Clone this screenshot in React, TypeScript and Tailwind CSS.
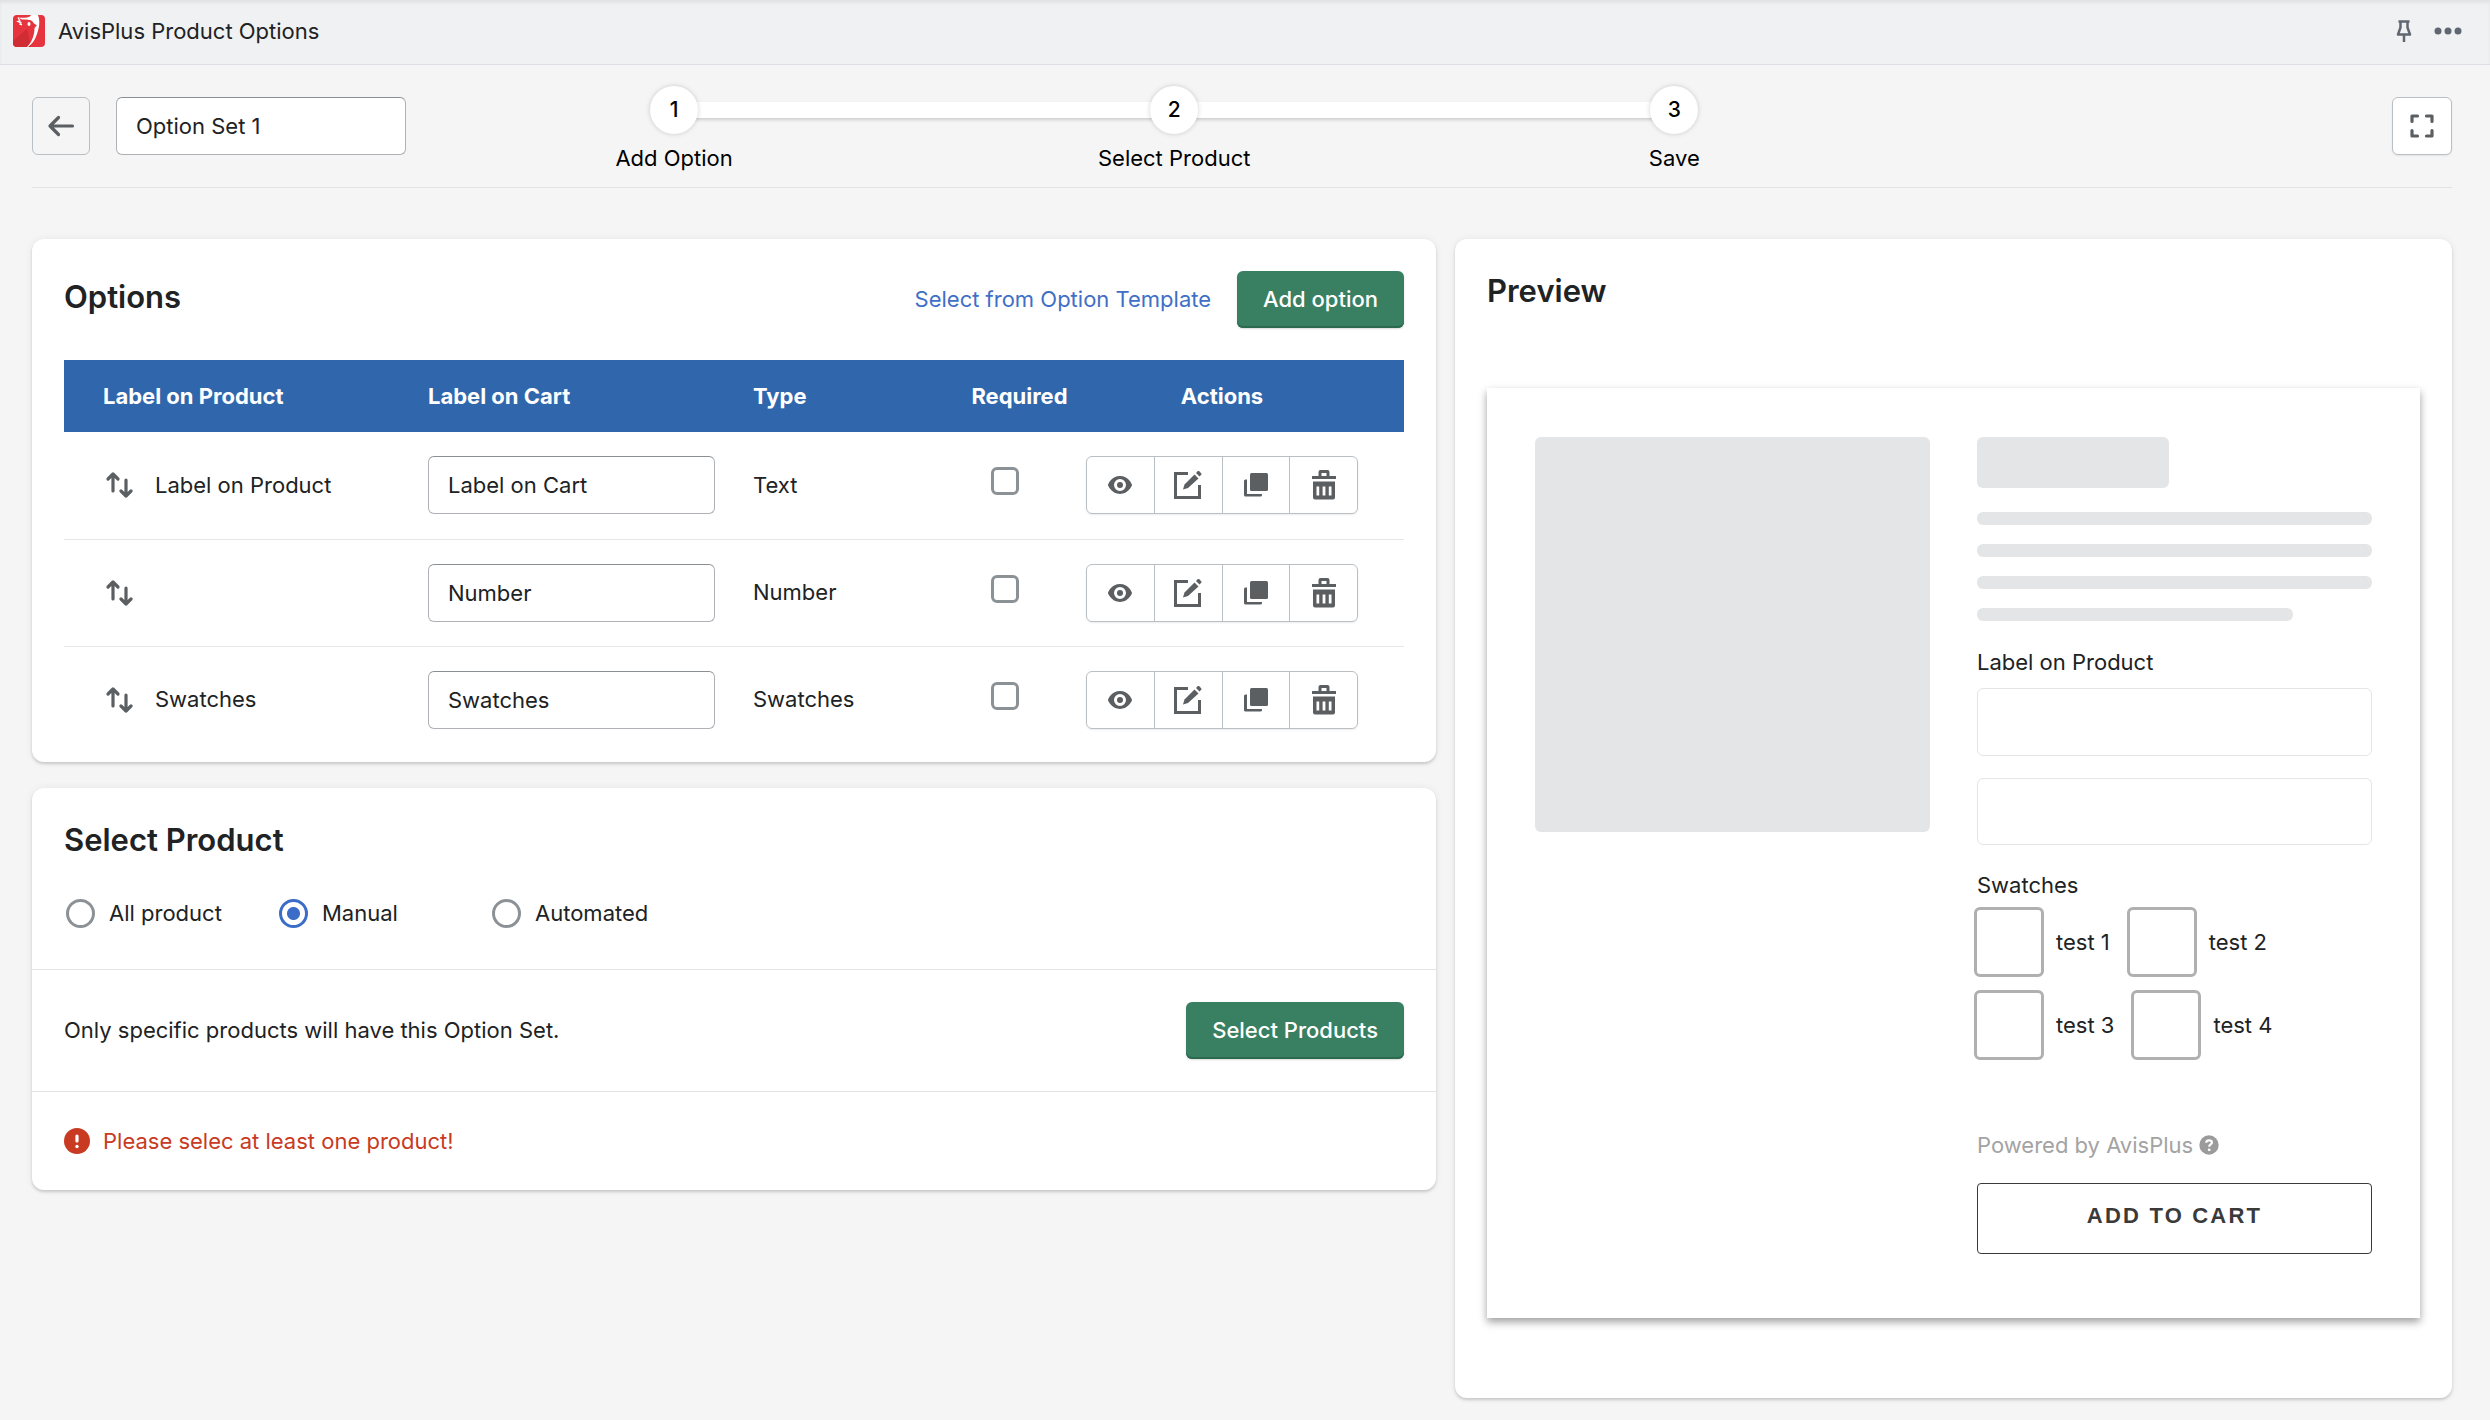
import { useState } from 'react';
import type { ReactNode } from 'react';

interface OptionRow {
  id: number;
  label: string;
  cart: string;
  type: string;
}

const OPTIONS: OptionRow[] = [
  { id: 1, label: 'Label on Product', cart: 'Label on Cart', type: 'Text' },
  { id: 2, label: '', cart: 'Number', type: 'Number' },
  { id: 3, label: 'Swatches', cart: 'Swatches', type: 'Swatches' },
];

const STEPS = ['Add Option', 'Select Product', 'Save'];
const PRODUCT_MODES = ['All product', 'Manual', 'Automated'];
const SWATCH_ROWS = [
  ['test 1', 'test 2'],
  ['test 3', 'test 4'],
];

const cardClass = 'bg-white rounded-xl shadow-[0_0_8px_rgba(23,24,24,0.06),0_2px_3px_rgba(0,0,0,0.16)]';
const inputClass =
  'h-[58px] w-full rounded-md border border-[#aeb1b5] border-t-[#8a8f94] bg-white px-[19px] text-[22px] text-[#202223] outline-none';
const primaryClass =
  'h-[57px] rounded-md bg-[#397f62] px-[26px] text-[22px] font-medium text-white shadow-[inset_0_-2px_0_#2c6a50,0_1px_2px_rgba(0,0,0,0.15)]';

function Logo() {
  return (
    <svg className="w-8 h-8" viewBox="0 0 32 32">
      <rect width="32" height="32" rx="4" fill="#e5343e" />
      <path d="M0 26 L14 14 L18 32 H4 a4 4 0 0 1-4-4z" fill="#d02c33" />
      <path
        d="M17 1.500 L18 0 H25 C27.500 7 26 13 24 19 C22 25 19 29 15 32 H14 C19 27 21.500 20 21.500 13 L23.800 10.500 L20.500 8 C19 4.500 15 4.500 9 4.500 L5 2.500 C10 3 14 3 17 1.500z"
        fill="#fff"
      />
      <path d="M5 2.500 L7 6 L5 6.500 L8 8 L7 9 L9 9.800" fill="none" stroke="#fff" strokeWidth="1.300" />
      <ellipse cx="16" cy="9" rx="1.500" ry="2" fill="#fff" />
    </svg>
  );
}

function PinIcon() {
  return (
    <svg className="w-6 h-6" viewBox="0 0 24 24" fill="none" stroke="#5f6772" strokeWidth="2.500" strokeLinejoin="round">
      <path d="M6.500 2.500h11M8.500 3v5.500L6 15.500h12L15.500 8.500V3" />
      <path d="M12 15.500V23" />
    </svg>
  );
}

function DotsIcon() {
  return (
    <svg className="w-7 h-6" viewBox="0 0 28 24" fill="#5f6772">
      <circle cx="4" cy="12" r="3.500" />
      <circle cx="14" cy="12" r="3.500" />
      <circle cx="24" cy="12" r="3.500" />
    </svg>
  );
}

function BackIcon() {
  return (
    <svg className="w-7 h-6" viewBox="0 0 28 24" fill="none" stroke="#5c5f62" strokeWidth="3.200" strokeLinecap="round" strokeLinejoin="round">
      <path d="M25.500 12H3M11.500 3.500L3 12l8.500 8.500" />
    </svg>
  );
}

function ExpandIcon() {
  return (
    <svg className="w-6 h-6" viewBox="0 0 24 24" fill="none" stroke="#5c5f62" strokeWidth="3.200" strokeLinecap="round" strokeLinejoin="round">
      <path d="M2 7.500V2h5.500M16.500 2H22v5.500M22 16.500V22h-5.500M7.500 22H2v-5.500" />
    </svg>
  );
}

function SortIcon() {
  return (
    <svg className="w-7 h-7" viewBox="0 0 28 28" fill="none" stroke="#5c5f62" strokeWidth="3.200" strokeLinecap="round" strokeLinejoin="round">
      <path d="M8 20V3M3 8l5-5 5 5" />
      <path d="M21 9v16M16 20l5 5 5-5" />
    </svg>
  );
}

function EyeIcon() {
  return (
    <svg className="w-[30px] h-[30px]" viewBox="0 0 20 20" fill="#5c5f62">
      <path
        fillRule="evenodd"
        d="M17.928 9.628c-.092-.229-2.317-5.628-7.929-5.628s-7.837 5.399-7.929 5.628a1.017 1.017 0 0 0 0 .744c.092.229 2.317 5.628 7.929 5.628s7.837-5.399 7.929-5.628a1.017 1.017 0 0 0 0-.744m-7.929 4.372a4 4 0 1 1 0-8 4 4 0 0 1 0 8m0-6a2 2 0 1 0 0 4 2 2 0 0 0 0-4"
      />
    </svg>
  );
}

function EditIcon() {
  return (
    <svg className="w-7 h-7" viewBox="0 0 28 28">
      <path d="M14 2.500H1.500v24h24V14" fill="none" stroke="#5c5f62" strokeWidth="3" />
      <path d="M9 18.500l1.500-5L20.500 3.500l4 4L14 17z" fill="#5c5f62" />
      <path d="M22 2l1.700-1.700c.5-.4 1-.4 1.500 0l2 2c.4.500.4 1 0 1.500L25.500 5.500z" fill="#5c5f62" />
    </svg>
  );
}

function DuplicateIcon() {
  return (
    <svg className="w-6 h-6" viewBox="0 0 24 24" fill="#5c5f62">
      <rect x="6" y="0" width="18" height="18" rx="1.500" />
      <path d="M3 6.500v14.500h15v1a1.500 1.500 0 0 1-1.500 1.500H1.500A1.500 1.500 0 0 1 0 22V8a1.500 1.500 0 0 1 1.500-1.500z" />
    </svg>
  );
}

function TrashIcon() {
  return (
    <svg className="w-6 h-[30px]" viewBox="0 0 24 30" fill="#5c5f62">
      <path d="M6.500 6V2a2 2 0 0 1 2-2h7a2 2 0 0 1 2 2v4H24v3H0V6zM9.500 6h5V3h-5z" fillRule="evenodd" />
      <path
        fillRule="evenodd"
        d="M1 11.500h22v16a2 2 0 0 1-2 2h-18a2 2 0 0 1-2-2zM4.500 16.500v9h2.700v-9zM10.600 16.500v9h2.800v-9zM16.800 16.500v9h2.700v-9z"
      />
    </svg>
  );
}

function ErrorIcon() {
  return (
    <svg className="w-[26px] h-[26px]" viewBox="0 0 26 26">
      <circle cx="13" cy="13" r="13" fill="#c83a22" />
      <path d="M13 8v5" stroke="#fff" strokeWidth="3.200" strokeLinecap="round" />
      <circle cx="13" cy="18.500" r="1.700" fill="#fff" />
    </svg>
  );
}

function HelpIcon() {
  return (
    <svg className="w-5 h-5" viewBox="0 0 20 20">
      <circle cx="10" cy="10" r="9.700" fill="#9b9b9b" />
      <path d="M7.200 7.700c.2-3.300 5.700-3.100 5.700-.2 0 2-2.700 2-2.700 4.200" fill="none" stroke="#fff" strokeWidth="2.200" />
      <circle cx="10.200" cy="14.800" r="1.400" fill="#fff" />
    </svg>
  );
}

function ActionButton({ label, children }: { label: string; children: ReactNode }) {
  return (
    <button
      aria-label={label}
      className="flex-1 h-[56px] flex items-center justify-center border-l border-[#babfc3] first:border-l-0"
    >
      {children}
    </button>
  );
}

function Stepper() {
  return (
    <ol className="relative w-[62%] ml-[18px] flex">
      {/* track behind the numbers */}
      <li
        aria-hidden="true"
        className="absolute top-4 left-1/6 right-1/6 h-4 bg-white shadow-[0_2px_3px_rgba(0,0,0,0.16)]"
      />
      {STEPS.map((step, i) => (
        <li key={step} className="relative flex-1 flex flex-col items-center text-black">
          <span className="w-12 h-12 rounded-full bg-white flex items-center justify-center text-[21px] font-medium shadow-[0_0_5px_rgba(0,0,0,0.18)]">
            {i + 1}
          </span>
          <span className="mt-2 text-[22px] leading-8">{step}</span>
        </li>
      ))}
    </ol>
  );
}

function OptionsCard() {
  return (
    <section className={`${cardClass} px-8 pt-8 pb-[9px]`}>
      <div className="flex items-start justify-between">
        <h2 className="text-[31px] leading-[52px] font-semibold">Options</h2>
        <div className="flex items-center gap-[26px]">
          <a href="#templates" className="text-[22px] text-[#3f6fc6]">
            Select from Option Template
          </a>
          <button className={primaryClass}>Add option</button>
        </div>
      </div>
      <table className="mt-8 w-full table-fixed text-[22px]">
        <colgroup>
          <col className="w-[351px]" />
          <col className="w-[325px]" />
          <col className="w-[226px]" />
          <col className="w-[107px]" />
          <col className="w-[331px]" />
        </colgroup>
        <thead>
          <tr className="h-[72px] bg-[#3067ac] text-left text-white">
            <th className="pl-[39px] font-bold">Label on Product</th>
            <th className="pl-[13px] font-bold">Label on Cart</th>
            <th className="pl-[13px] font-bold">Type</th>
            <th className="text-center font-bold">Required</th>
            <th className="pl-[13px] pr-[46px] text-center font-bold">Actions</th>
          </tr>
        </thead>
        <tbody>
          {OPTIONS.map((option) => (
            <tr key={option.id} className="h-[107px] border-b border-[#e6e7e8] last:border-b-0">
              <td className="pl-[41px]">
                <div className="flex items-center gap-[22px]">
                  <SortIcon />
                  {option.label}
                </div>
              </td>
              <td className="pl-[13px] pr-[25px]">
                <input aria-label="Label on cart" defaultValue={option.cart} className={inputClass} />
              </td>
              <td className="pl-[13px]">{option.type}</td>
              <td className="pr-[30px] pb-2 text-center">
                <input
                  type="checkbox"
                  aria-label="Required"
                  className="block mx-auto w-7 h-7 appearance-none rounded-md border-3 border-[#8c9196] bg-white checked:bg-[#3b6cc7]"
                />
              </td>
              <td className="pl-[13px] pr-[46px]">
                <div className="flex rounded-md border border-[#babfc3] shadow-[0_1px_2px_rgba(0,0,0,0.08)]">
                  <ActionButton label="View">
                    <EyeIcon />
                  </ActionButton>
                  <ActionButton label="Edit">
                    <EditIcon />
                  </ActionButton>
                  <ActionButton label="Duplicate">
                    <DuplicateIcon />
                  </ActionButton>
                  <ActionButton label="Delete">
                    <TrashIcon />
                  </ActionButton>
                </div>
              </td>
            </tr>
          ))}
        </tbody>
      </table>
    </section>
  );
}

function ProductCard() {
  const [mode, setMode] = useState('Manual');

  return (
    <section className={`${cardClass} text-[22px]`}>
      <div className="px-8 pt-8 pb-10">
        <h2 className="text-[31px] leading-10 font-semibold">Select Product</h2>
        <div className="mt-[37px] flex">
          {PRODUCT_MODES.map((item) => (
            <label key={item} className="w-[213px] flex items-center gap-[14px] pl-[2px] leading-8">
              <input
                type="radio"
                name="mode"
                checked={mode === item}
                onChange={() => setMode(item)}
                className="w-[29px] h-[29px] appearance-none rounded-full border-3 border-[#8c9196] bg-white checked:border-[#3b6cc7] checked:bg-[radial-gradient(circle,#3b6cc7_6px,white_7px)]"
              />
              {item}
            </label>
          ))}
        </div>
      </div>
      <div className="px-8 py-8 flex items-center justify-between border-t border-[#e1e3e5]">
        <p>Only specific products will have this Option Set.</p>
        <button className={primaryClass}>Select Products</button>
      </div>
      <div className="px-8 py-8 flex items-center gap-[13px] border-t border-[#e1e3e5] text-[#c83a22]">
        <ErrorIcon />
        <p className="leading-[34px]">Please selec at least one product!</p>
      </div>
    </section>
  );
}

function PreviewCard() {
  return (
    <section className={`${cardClass} px-8 pt-8 pb-20`}>
      <h2 className="text-[31px] leading-10 font-semibold">Preview</h2>
      <div className="mt-[77px] grid grid-cols-2 gap-[47px] px-12 pt-[49px] pb-16 bg-white text-[22px] shadow-[0_4px_8px_rgba(0,0,0,0.38)]">
        <div className="aspect-square self-start rounded-md bg-[#e4e5e7]" />
        <div>
          <div className="w-48 h-[51px] rounded-md bg-[#e4e5e7]" />
          <div className="mt-6 flex flex-col gap-[19px]">
            <div className="h-[13px] rounded-md bg-[#e4e5e7]" />
            <div className="h-[13px] rounded-md bg-[#e4e5e7]" />
            <div className="h-[13px] rounded-md bg-[#e4e5e7]" />
            <div className="w-4/5 h-[13px] rounded-md bg-[#e4e5e7]" />
          </div>
          <label className="mt-[23px] block leading-9">
            Label on Product
            <input className="mt-2 block w-full h-[68px] rounded-md border border-[#e4e5e7]" />
          </label>
          <input
            aria-label="Number"
            type="text"
            className="mt-[22px] block w-full h-[67px] rounded-md border border-[#e4e5e7]"
          />
          <p className="mt-6 leading-8">Swatches</p>
          <div className="mt-[6px] -ml-[3px] flex flex-col gap-[13px]">
            {SWATCH_ROWS.map((row) => (
              <div key={row[0]} className="flex gap-[17px]">
                {row.map((name) => (
                  <button key={name} className="flex items-center gap-3">
                    <span className="w-[70px] h-[70px] rounded-md border-3 border-[#b0b0b0]" />
                    {name}
                  </button>
                ))}
              </div>
            ))}
          </div>
          <p className="mt-[69px] flex items-center gap-[6px] leading-8 text-[#a3a3a3]">
            Powered by AvisPlus
            <HelpIcon />
          </p>
          <button className="mt-[22px] w-full h-[71px] pb-[6px] rounded-sm border border-[#3a3a3a] font-['Liberation_Sans',sans-serif] font-bold tracking-widest text-[#3a3a3a]">
            ADD TO CART
          </button>
        </div>
      </div>
    </section>
  );
}

export default function App() {
  return (
    <div className="min-h-screen bg-[#f5f5f5] font-[Inter,sans-serif] text-[#202223]">
      {/* Top bar */}
      <header className="h-[65px] pl-[13px] pr-7 pb-[2px] flex items-center justify-between border-b border-[#dcdfe3] bg-[#f0f1f3] shadow-[inset_0_3px_3px_rgba(0,0,0,0.06)]">
        <div className="flex items-center gap-[13px]">
          <Logo />
          <h1 className="text-[22px]">AvisPlus Product Options</h1>
        </div>
        <div className="flex items-center gap-[18px]">
          <button aria-label="Pin">
            <PinIcon />
          </button>
          <button aria-label="More">
            <DotsIcon />
          </button>
        </div>
      </header>

      <main className="pl-8 pr-[38px] pb-5">
        {/* Option set name and progress */}
        <div className="pt-[21px] pb-[13px] flex items-start border-b border-[#e1e3e5]">
          <button
            aria-label="Back"
            className="mt-[11px] w-[58px] h-[58px] flex items-center justify-center rounded-md border border-[#babfc3]"
          >
            <BackIcon />
          </button>
          <div className="mt-[11px] ml-[26px] w-[290px]">
            <input aria-label="Option set name" defaultValue="Option Set 1" className={inputClass} />
          </div>
          <Stepper />
          <button
            aria-label="Full screen"
            className="mt-[11px] ml-auto w-[60px] h-[58px] flex items-center justify-center rounded-md border border-[#babfc3] bg-white shadow-[0_1px_2px_rgba(0,0,0,0.08)]"
          >
            <ExpandIcon />
          </button>
        </div>

        <div className="mt-[51px] grid grid-cols-[1404fr_997fr] items-start gap-[19px]">
          <div className="flex flex-col gap-[26px]">
            <OptionsCard />
            <ProductCard />
          </div>
          <PreviewCard />
        </div>
      </main>
    </div>
  );
}
